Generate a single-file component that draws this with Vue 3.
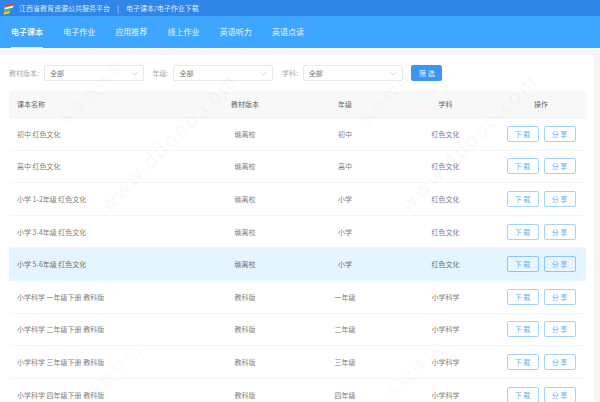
<script setup>
const tabs = ['电子课本', '电子作业', '应用推荐', '线上作业', '英语听力', '英语点读']

const filters = [
  { label: '教材版本:', value: '全部' },
  { label: '年级:', value: '全部' },
  { label: '学科:', value: '全部' },
]

const rows = [
  { name: '初中 红色文化', edition: '赣离校', grade: '初中', subject: '红色文化' },
  { name: '高中 红色文化', edition: '赣离校', grade: '高中', subject: '红色文化' },
  { name: '小学 1-2年级 红色文化', edition: '赣离校', grade: '小学', subject: '红色文化' },
  { name: '小学 3-4年级 红色文化', edition: '赣离校', grade: '小学', subject: '红色文化' },
  { name: '小学 5-6年级 红色文化', edition: '赣离校', grade: '小学', subject: '红色文化', active: true },
  { name: '小学科学 一年级下册 教科版', edition: '教科版', grade: '一年级', subject: '小学科学' },
  { name: '小学科学 二年级下册 教科版', edition: '教科版', grade: '二年级', subject: '小学科学' },
  { name: '小学科学 三年级下册 教科版', edition: '教科版', grade: '三年级', subject: '小学科学' },
  { name: '小学科学 四年级下册 教科版', edition: '教科版', grade: '四年级', subject: '小学科学' },
]
</script>

<template>
  <div class="page">
    <header class="topbar">
      <svg class="logo" viewBox="0 0 16 16" width="12" height="13">
        <path d="M3 3 L15 0 L14 3 L3 6 Z" fill="#e8443a" />
        <path d="M2 7 L14 4 L13 7 L2 10 Z" fill="#f4f4f4" />
        <path d="M1 10 L13 7 L12 10 L1 13 Z" fill="#3cb371" />
        <path d="M1 13 L10 11 L8 15 L1 16 Z" fill="#f2c230" />
      </svg>
      <span class="site">江西省教育资源公共服务平台</span>
      <span class="sep">|</span>
      <span class="site">电子课本/电子作业下载</span>
    </header>

    <nav class="tabs">
      <a v-for="(t, i) in tabs" :key="t" class="tab" :class="{ on: i === 0 }">{{ t }}</a>
    </nav>

    <main class="card">
      <div class="filters">
        <div v-for="f in filters" :key="f.label" class="filter">
          <label>{{ f.label }}</label>
          <div class="select">
            <span>{{ f.value }}</span>
            <svg viewBox="0 0 10 6" width="7" height="5"><path d="M1 1 L5 5 L9 1" fill="none" stroke="#c4c7cc" stroke-width="1" /></svg>
          </div>
        </div>
        <button class="search">筛 选</button>
      </div>

      <div class="table">
        <div class="row head">
          <div>课本名称</div>
          <div class="c">教材版本</div>
          <div class="c">年级</div>
          <div class="c">学科</div>
          <div class="c">操作</div>
        </div>
        <div v-for="r in rows" :key="r.name" class="row" :class="{ active: r.active }">
          <div>{{ r.name }}</div>
          <div class="c">{{ r.edition }}</div>
          <div class="c">{{ r.grade }}</div>
          <div class="c">{{ r.subject }}</div>
          <div class="ops">
            <button>下 载</button>
            <button>分 享</button>
          </div>
        </div>
      </div>
    </main>

    <div class="mark cn a1">多多软件站</div>
    <div class="mark en a2">www.ddooo.com</div>
    <div class="mark cn a3">多多软件站</div>
    <div class="mark en a4">www.ddooo.com</div>
    <div class="mark cn a5">多多软件站</div>
    <div class="mark cn a6">多多软件站</div>
  </div>
</template>

<style scoped>
.page {
  position: relative;
  width: 600px;
  height: 402px;
  overflow: hidden;
  background: #f4f5f7;
  font-family: "Noto Sans CJK SC", "Liberation Sans", sans-serif;
  color: #666;
}

.topbar {
  display: flex;
  align-items: center;
  height: 16px;
  padding-left: 3px;
  background: #2f86e8;
  color: #d9ebff;
  font-size: 7px;
}
.logo {
  margin-right: 4px;
}
.sep {
  margin: 0 7px;
}

.tabs {
  display: flex;
  height: 32px;
  padding-left: 11px;
  gap: 20px;
  background: #3fa6ff;
  border-bottom: 1px solid #fff;
}
.tab {
  position: relative;
  width: 32.2px;
  line-height: 31px;
  font-size: 8px;
  color: #eaf5ff;
  white-space: nowrap;
}
.tab.on {
  color: #fff;
  font-weight: 500;
}
.tab.on::after {
  content: "";
  position: absolute;
  left: 0;
  right: 0;
  bottom: 0;
  height: 1px;
  background: #d6ecff;
}

.card {
  width: 594px;
  height: 347px;
  margin-top: 6px;
  padding-top: 10px;
  box-sizing: border-box;
  background: #fff;
}

.filters {
  display: flex;
  align-items: center;
  height: 16px;
  padding-left: 9px;
}
.filter {
  display: flex;
  align-items: center;
  margin-right: 8.5px;
}
.filter label {
  margin-right: 5px;
  font-size: 7px;
  color: #aaa;
  white-space: nowrap;
}
.select {
  display: flex;
  align-items: center;
  justify-content: space-between;
  width: 100px;
  height: 16px;
  padding: 0 5px;
  box-sizing: border-box;
  border: 1px solid #e6e8eb;
  border-radius: 2px;
  font-size: 7px;
  color: #777;
}
.search {
  width: 31px;
  height: 16px;
  padding: 0;
  border: 0;
  border-radius: 2px;
  background: #3a97f5;
  color: #e8f3ff;
  font: inherit;
  font-size: 7px;
}

.table {
  width: 577px;
  margin: 10px 0 0 9px;
}
.row {
  display: grid;
  grid-template-columns: 178px 100px 100px 101px 1fr;
  align-items: center;
  height: 32.6px;
  box-sizing: border-box;
  padding-left: 8px;
  border-bottom: 1px solid #f5f6f7;
  font-size: 7px;
  color: #808080;
}
.row.head {
  height: 27px;
  background: #f8f8f9;
  border-bottom-color: #eeeff1;
  color: #666;
}
.row.active {
  background: #e4f5ff;
  border-bottom-color: #e4f5ff;
  color: #6c7378;
}
.c {
  text-align: center;
}
.ops {
  display: flex;
  justify-content: center;
  gap: 5px;
}
.ops button {
  width: 32px;
  height: 16px;
  padding: 0;
  background: #fff;
  border: 1px solid #a6d2fb;
  border-radius: 2px;
  color: #64aff6;
  font: inherit;
  font-size: 7px;
}
.active .ops button {
  background: #e9f6ff;
  border-color: #8cc4fa;
}

.mark {
  position: absolute;
  transform: rotate(-45deg);
  color: rgba(120, 130, 150, 0.06);
  white-space: nowrap;
  pointer-events: none;
}
.cn {
  font-size: 16px;
  letter-spacing: 2px;
}
.en {
  font-size: 20px;
  letter-spacing: 2px;
}
.a1 { left: 47px; top: 81px; }
.a2 { left: 75px; top: 127px; }
.a3 { left: 347px; top: 81px; }
.a4 { left: 375px; top: 127px; }
.a5 { left: 62px; top: 366px; }
.a6 { left: 362px; top: 366px; }
</style>
